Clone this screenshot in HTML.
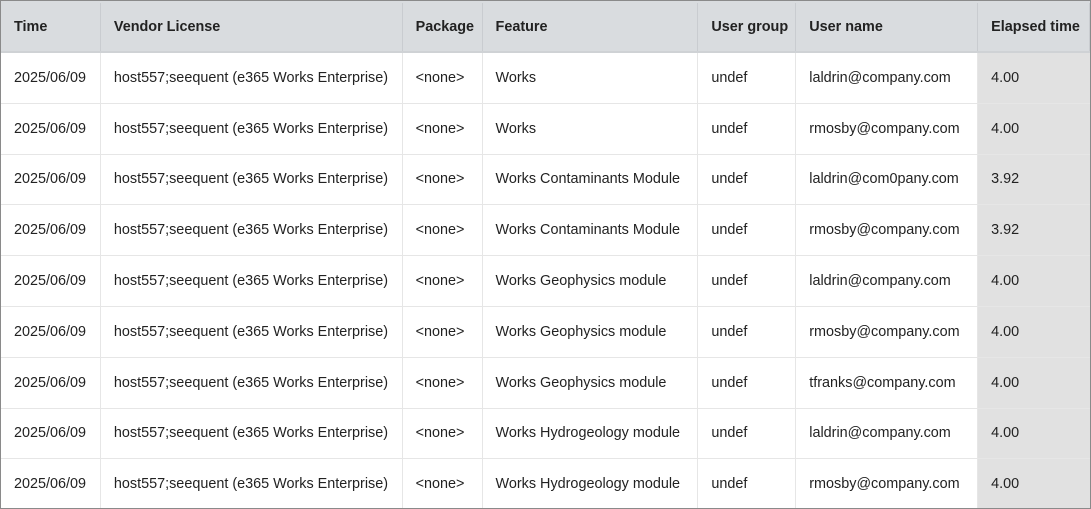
<!DOCTYPE html>
<html><head><meta charset="utf-8"><style>
*{margin:0;padding:0;box-sizing:border-box}
body{width:1091px;height:509px;overflow:hidden;background:#fff;font-family:"Liberation Sans",sans-serif;font-size:14.4px;color:#222}
.wrap{position:absolute;left:0;top:0;width:1091px;height:509px;border:1px solid #8a8a8a;overflow:hidden}
.row{display:flex;height:50.8px;border-bottom:1px solid #e6e6e6}
.row.h{height:52px;background:#d9dcdf;font-weight:bold;color:#222;border-bottom:2px solid #cfd2d5;padding-top:2px}
.c{display:flex;align-items:center;padding-left:13px;border-right:1px solid #e6e6e6;white-space:nowrap;overflow:hidden}
.h .c{border-right:1px solid #c9ccd0}
.c1{width:100px}.c2{width:302px}.c3{width:80px}.c4{width:216px}.c5{width:98px}.c6{width:182px}.c7{width:112px;border-right:none;background:#e1e1e1}
.h .c7{background:#d9dcdf}
</style></head><body><div class="wrap">
<div class="row h"><div class="c c1">Time</div><div class="c c2">Vendor License</div><div class="c c3">Package</div><div class="c c4">Feature</div><div class="c c5">User group</div><div class="c c6">User name</div><div class="c c7">Elapsed time</div></div>
<div class="row"><div class="c c1">2025/06/09</div><div class="c c2">host557;seequent (e365 Works Enterprise)</div><div class="c c3">&lt;none&gt;</div><div class="c c4">Works</div><div class="c c5">undef</div><div class="c c6">laldrin@company.com</div><div class="c c7">4.00</div></div>
<div class="row"><div class="c c1">2025/06/09</div><div class="c c2">host557;seequent (e365 Works Enterprise)</div><div class="c c3">&lt;none&gt;</div><div class="c c4">Works</div><div class="c c5">undef</div><div class="c c6">rmosby@company.com</div><div class="c c7">4.00</div></div>
<div class="row"><div class="c c1">2025/06/09</div><div class="c c2">host557;seequent (e365 Works Enterprise)</div><div class="c c3">&lt;none&gt;</div><div class="c c4">Works Contaminants Module</div><div class="c c5">undef</div><div class="c c6">laldrin@com0pany.com</div><div class="c c7">3.92</div></div>
<div class="row"><div class="c c1">2025/06/09</div><div class="c c2">host557;seequent (e365 Works Enterprise)</div><div class="c c3">&lt;none&gt;</div><div class="c c4">Works Contaminants Module</div><div class="c c5">undef</div><div class="c c6">rmosby@company.com</div><div class="c c7">3.92</div></div>
<div class="row"><div class="c c1">2025/06/09</div><div class="c c2">host557;seequent (e365 Works Enterprise)</div><div class="c c3">&lt;none&gt;</div><div class="c c4">Works Geophysics module</div><div class="c c5">undef</div><div class="c c6">laldrin@company.com</div><div class="c c7">4.00</div></div>
<div class="row"><div class="c c1">2025/06/09</div><div class="c c2">host557;seequent (e365 Works Enterprise)</div><div class="c c3">&lt;none&gt;</div><div class="c c4">Works Geophysics module</div><div class="c c5">undef</div><div class="c c6">rmosby@company.com</div><div class="c c7">4.00</div></div>
<div class="row"><div class="c c1">2025/06/09</div><div class="c c2">host557;seequent (e365 Works Enterprise)</div><div class="c c3">&lt;none&gt;</div><div class="c c4">Works Geophysics module</div><div class="c c5">undef</div><div class="c c6">tfranks@company.com</div><div class="c c7">4.00</div></div>
<div class="row"><div class="c c1">2025/06/09</div><div class="c c2">host557;seequent (e365 Works Enterprise)</div><div class="c c3">&lt;none&gt;</div><div class="c c4">Works Hydrogeology module</div><div class="c c5">undef</div><div class="c c6">laldrin@company.com</div><div class="c c7">4.00</div></div>
<div class="row"><div class="c c1">2025/06/09</div><div class="c c2">host557;seequent (e365 Works Enterprise)</div><div class="c c3">&lt;none&gt;</div><div class="c c4">Works Hydrogeology module</div><div class="c c5">undef</div><div class="c c6">rmosby@company.com</div><div class="c c7">4.00</div></div>
</div></body></html>
